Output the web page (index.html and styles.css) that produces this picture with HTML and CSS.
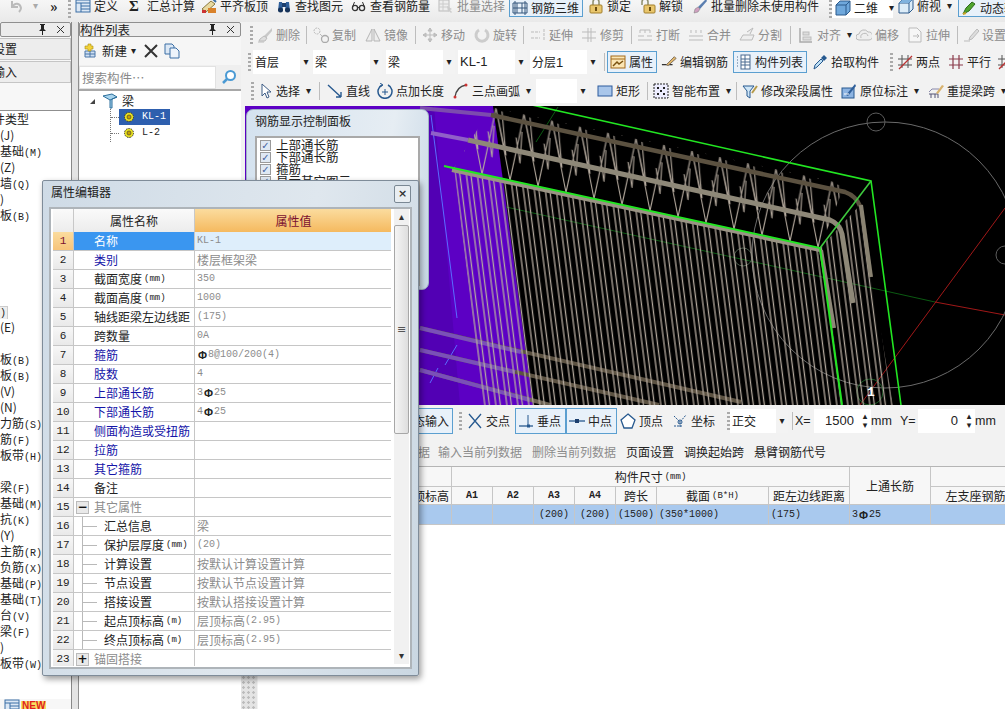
FILE: index.html
```html
<!DOCTYPE html>
<html lang="zh-CN">
<head>
<meta charset="utf-8">
<title>钢筋三维</title>
<link rel="stylesheet" href="styles.css">
</head>
<body>
<svg class="defs" aria-hidden="true">
  <symbol id="undo" viewBox="0 0 16 16"><path d="M4 3v6h6M4 9c3-5 8-4 9 1 0 2-1 3-2 4" fill="none" stroke="#bbb" stroke-width="2"/></symbol>
  <symbol id="def" viewBox="0 0 16 16"><rect x="1" y="2" width="14" height="12" fill="#dce8f5" stroke="#3b6ea5"/><path d="M1 5h14M6 5v9M6 8h9M6 11h9" stroke="#3b6ea5"/></symbol>
  <symbol id="flush" viewBox="0 0 16 16"><path d="M1 11l9-8 4 3-9 8z" fill="#e8d9a0" stroke="#8a7a40"/><rect x="7" y="10" width="8" height="5" fill="#d9822b"/><rect x="1" y="12" width="4" height="3" fill="#c33"/><path d="M12 1l3 3" stroke="#3b6ea5" stroke-width="2"/></symbol>
  <symbol id="bino" viewBox="0 0 16 16"><path d="M2 13l1-9h3l1 9zM9 13l1-9h3l1 9z" fill="#2f5f9a"/><rect x="6" y="5" width="4" height="4" fill="#1c3f6e"/><circle cx="4.500" cy="12" r="2.500" fill="#16335a"/><circle cx="11.500" cy="12" r="2.500" fill="#16335a"/></symbol>
  <symbol id="glass" viewBox="0 0 16 16"><circle cx="4" cy="10" r="2.600" fill="none" stroke="#333" stroke-width="1.300"/><circle cx="11" cy="10" r="2.600" fill="none" stroke="#333" stroke-width="1.300"/><path d="M6.500 9.500h2M1.500 9l2-5M13.500 9l-2-5" stroke="#333"/></symbol>
  <symbol id="batch" viewBox="0 0 16 16"><rect x="1" y="2" width="10" height="11" fill="#eee" stroke="#bbb"/><path d="M1 6h10M1 9h10M5 2v11" stroke="#ccc"/><path d="M9 8l5 3-2 1 2 2-1 1-2-2-1 1z" fill="#ccc"/></symbol>
  <symbol id="grid3" viewBox="0 0 16 16"><path d="M1 3h14v10H1zM5 3v10M10 3v10M1 8h14" fill="none" stroke="#34567c"/><path d="M3 1v14M13 1v14" stroke="#34567c"/></symbol>
  <symbol id="lock" viewBox="0 0 16 16"><path d="M5 7V4a3 3 0 016 0v3" fill="none" stroke="#8c8c6a" stroke-width="1.500"/><rect x="2" y="7" width="12" height="8" rx="1" fill="#e9c66c" stroke="#a17f2c"/><rect x="7" y="9" width="2" height="4" fill="#6b4d10"/></symbol>
  <symbol id="unlock" viewBox="0 0 16 16"><path d="M2 7V4a3 3 0 016 0v3" fill="none" stroke="#8c8c6a" stroke-width="1.500"/><rect x="4" y="7" width="11" height="8" rx="1" fill="#e9c66c" stroke="#a17f2c"/><rect x="9" y="9" width="2" height="4" fill="#6b4d10"/></symbol>
  <symbol id="brush" viewBox="0 0 16 16"><path d="M14 1L6 9l2 2 7-8z" fill="#5b7fb0"/><path d="M6 9l-3 2-1 4 4-1 2-3z" fill="#d0a0c0" stroke="#777" stroke-width=".5"/></symbol>
  <symbol id="cube" viewBox="0 0 16 16"><path d="M1 5l4-4h10v10l-4 4H1z" fill="#6fa8dc" stroke="#2c5b8c"/><path d="M1 5h10v10M11 5l4-4" fill="none" stroke="#2c5b8c"/></symbol>
  <symbol id="cubet" viewBox="0 0 16 16"><path d="M1 5l4-4h10v10l-4 4H1z" fill="#dcecf8" stroke="#2c5b8c"/><path d="M1 5h10v10M11 5l4-4" fill="none" stroke="#2c5b8c"/><path d="M1 5l4-4h10l-4 4z" fill="#7fb2de"/></symbol>
  <symbol id="dyn" viewBox="0 0 16 16"><path d="M2 14l3-6 6-6 3 2-6 7z" fill="#4fa52f" stroke="#2d6a1c"/><path d="M2 14l3-1" stroke="#c9a227" stroke-width="2"/></symbol>
  <symbol id="erase" viewBox="0 0 16 16"><path d="M15 1L7 9l2 2 6-7z" fill="#c8c8c8"/><path d="M7 9l-4 3-1 2h6l2-3z" fill="#ddd" stroke="#bbb"/><path d="M1 15h6" stroke="#bbb"/></symbol>
  <symbol id="copy" viewBox="0 0 16 16"><circle cx="4" cy="4" r="3" fill="none" stroke="#bbb" stroke-dasharray="2 1"/><circle cx="12" cy="12" r="3.500" fill="none" stroke="#aaa" stroke-width="1.300"/><path d="M7 7l2 2" stroke="#bbb"/></symbol>
  <symbol id="mirror" viewBox="0 0 16 16"><path d="M7 2v12H1zM9 2v12h6z" fill="#eee" stroke="#b5b5b5"/></symbol>
  <symbol id="move" viewBox="0 0 16 16"><path d="M8 1v14M1 8h14M8 1L6 4h4zM8 15l-2-3h4zM1 8l3-2v4zM15 8l-3-2v4z" fill="#ccc" stroke="#bbb"/></symbol>
  <symbol id="rot" viewBox="0 0 16 16"><path d="M5 3a6 6 0 106 0" fill="none" stroke="#ccc" stroke-width="3"/></symbol>
  <symbol id="ext" viewBox="0 0 16 16"><path d="M14 2v12M1 5h9M1 11h9" stroke="#bbb" fill="none" stroke-dasharray="3 1"/></symbol>
  <symbol id="trim" viewBox="0 0 16 16"><path d="M7 1v14M10 1v14M1 5h14M1 11h14" stroke="#bbb" fill="none"/></symbol>
  <symbol id="brk" viewBox="0 0 16 16"><path d="M1 9h6M10 9h5M1 13h14M3 3v3M8 3v3M13 3v3M3 3h10" stroke="#bbb" fill="none"/></symbol>
  <symbol id="merge" viewBox="0 0 16 16"><path d="M1 9h14M1 13h14M3 3v3M8 3v3M13 3v3" stroke="#bbb" fill="none"/></symbol>
  <symbol id="split" viewBox="0 0 16 16"><path d="M1 13h12l2-5H4zM8 5l6-4-3 6" fill="#eee" stroke="#bbb"/></symbol>
  <symbol id="align" viewBox="0 0 16 16"><path d="M2 1v14h12" fill="none" stroke="#aaa" stroke-width="1.500"/><rect x="5" y="5" width="6" height="3" fill="#ddd" stroke="#bbb"/><rect x="5" y="10" width="8" height="3" fill="#ddd" stroke="#bbb"/></symbol>
  <symbol id="cloud" viewBox="0 0 16 16"><path d="M3 13a3 3 0 010-6 5 5 0 019-2 4 4 0 011 8z" fill="#eee" stroke="#bbb"/><path d="M5 11a3 3 0 017-2" fill="none" stroke="#bbb"/></symbol>
  <symbol id="stretch" viewBox="0 0 16 16"><path d="M2 1h8l4 4v10H2z" fill="#f6f6f6" stroke="#bbb"/><path d="M6 9h6M10 7l2 2-2 2" fill="none" stroke="#bbb"/></symbol>
  <symbol id="gear" viewBox="0 0 16 16"><path d="M1 14h6M14 2L7 10l-1 3 3-1 7-8z" fill="#ddd" stroke="#bbb"/></symbol>
  <symbol id="attr" viewBox="0 0 16 16"><rect x="1" y="2" width="14" height="12" fill="#fbe6b5" stroke="#a36a1a"/><path d="M1 5h14" stroke="#a36a1a"/><path d="M3 12l4-4 2 2 4-3" stroke="#7a5210" fill="none" stroke-width="1.500"/></symbol>
  <symbol id="edit" viewBox="0 0 18 16"><path d="M1 11h12" stroke="#222" stroke-width="1.300"/><path d="M6 11l9-9 2 2-9 8z" fill="#e2b86a" stroke="#765"/></symbol>
  <symbol id="list" viewBox="0 0 16 16"><rect x="5" y="1" width="9" height="14" fill="#fff" stroke="#4a6a8f"/><path d="M5 5h9M5 8h9M5 11h9M9 1v14" stroke="#4a6a8f"/><path d="M1 3h2M1 6h2M1 9h2M1 12h2" stroke="#4a6a8f" stroke-dasharray="1 1"/></symbol>
  <symbol id="drop" viewBox="0 0 16 16"><path d="M2 15l1-4 6-6 2 2-6 6z" fill="#bfe0f5" stroke="#27598f"/><path d="M9 4l3-3 3 3-3 3z" fill="#27598f"/></symbol>
  <symbol id="twop" viewBox="0 0 16 16"><path d="M5 1v13M11 1v13M1 5h14M1 11h14" stroke="#555" fill="none"/><path d="M2 15L15 2" stroke="#b33" stroke-width="1.300"/></symbol>
  <symbol id="para" viewBox="0 0 16 16"><path d="M5 1v14M11 1v14M1 5h14M1 11h14" stroke="#8a3a4a" fill="none" stroke-width="1.200"/></symbol>
  <symbol id="cur" viewBox="0 0 13 16"><path d="M2 1v12l3-3 2 5 2-1-2-5h4z" fill="#fff" stroke="#3d5c85"/></symbol>
  <symbol id="line" viewBox="0 0 16 16"><path d="M1 2l13 12M14 14v-5M14 14H9" stroke="#27598f" fill="none" stroke-width="1.400"/></symbol>
  <symbol id="ptlen" viewBox="0 0 16 16"><path d="M5 2a7 7 0 106 0" fill="none" stroke="#27598f" stroke-width="1.500"/><path d="M3 0l3 2-3 2M8 6v6M5 9h6" stroke="#27598f" fill="none"/></symbol>
  <symbol id="arc" viewBox="0 0 16 16"><path d="M2 14C3 7 7 3 13 2" fill="none" stroke="#444" stroke-width="1.300"/><circle cx="2" cy="14" r="1.500" fill="#c33"/><circle cx="13" cy="2" r="1.500" fill="#c33"/></symbol>
  <symbol id="rect" viewBox="0 0 16 16"><rect x="1" y="3" width="14" height="10" fill="#a9c6ea" stroke="#2c5b9c"/></symbol>
  <symbol id="smart" viewBox="0 0 16 16"><rect x="1" y="1" width="14" height="14" fill="#eef" stroke="#222" stroke-dasharray="2 1"/><path d="M4 4h2v2H4zM10 4h2v2h-2zM7 7h2v2H7zM4 10h2v2H4zM10 10h2v2h-2z" fill="#222"/></symbol>
  <symbol id="funnel" viewBox="0 0 16 16"><path d="M1 3h11L8 8v7L5 13V8z" fill="#cfe6f7" stroke="#27598f"/><path d="M10 10l5-7" stroke="#b59a4a" stroke-width="2"/></symbol>
  <symbol id="tag" viewBox="0 0 16 16"><rect x="1" y="5" width="12" height="10" fill="#8db4e2" stroke="#27598f"/><path d="M5 12L14 1l1 2-8 10z" fill="#2f5f9a"/><path d="M3 11h5" stroke="#fff"/></symbol>
  <symbol id="beam" viewBox="0 0 16 16"><path d="M1 11h9v4M3 11v4M7 11v4" fill="none" stroke="#557" /><path d="M1 9l3-3h7" fill="none" stroke="#88a"/><path d="M8 10l6-8 2 1-6 8z" fill="#d8b26e"/></symbol>
  <symbol id="cross" viewBox="0 0 16 16"><path d="M2 1l12 14M14 1L2 15" stroke="#27598f" stroke-width="1.300"/></symbol>
  <symbol id="perp" viewBox="0 0 16 16"><path d="M1 13h14" stroke="#27598f" stroke-width="1.300"/><path d="M10 2v11" stroke="#27598f"/><rect x="9" y="11.500" width="3" height="3" fill="#27598f"/></symbol>
  <symbol id="mid" viewBox="0 0 16 16"><path d="M0 8h16" stroke="#27598f" stroke-width="1.300"/><rect x="6" y="6" width="4" height="4" fill="#1c3f6e"/></symbol>
  <symbol id="vert" viewBox="0 0 16 16"><path d="M8 1l7 6-3 8H4L1 7z" fill="#fff" stroke="#27598f" stroke-width="1.300"/></symbol>
  <symbol id="coord" viewBox="0 0 16 16"><path d="M2 3l6 6 6-7M8 9v6M2 13h8" stroke="#27598f" fill="none" stroke-dasharray="2 1"/><circle cx="8" cy="9" r="2" fill="none" stroke="#27598f"/></symbol>
  <symbol id="newi" viewBox="0 0 16 16"><path d="M2 8h10v6H2z" fill="#cfe0f3" stroke="#4a76a8"/><path d="M2 11h10M7 8v6" stroke="#4a76a8"/><path d="M5 1h3v2h2v3H8v2H5V6H2V3h3z" fill="#f2d23a" stroke="#a88f10" stroke-width=".6"/></symbol>
  <symbol id="beamt" viewBox="0 0 16 16"><path d="M1 3l9-2 5 3-5 2v9H8V7z" fill="#a8d4ee" stroke="#2c6f9c"/><path d="M8 7l7-3" stroke="#2c6f9c"/></symbol>
  <symbol id="gearj" viewBox="0 0 12 12"><circle cx="6" cy="6" r="4.500" fill="#e8e020" stroke="#333" stroke-dasharray="1.500 1"/><circle cx="6" cy="6" r="2" fill="#c9a000" stroke="#333" stroke-width=".6"/></symbol>
  <symbol id="copyd" viewBox="0 0 16 16"><path d="M1 1h7l2 2v8H1z" fill="#dce8f5" stroke="#3b6ea5"/><path d="M6 5h6l3 3v7H6z" fill="#eef4fb" stroke="#3b6ea5"/></symbol>
  <symbol id="pin" viewBox="0 0 9 11"><path d="M2 0h5v1H6v4l2 2H5v4H4V7H1l2-2V1H2z" fill="#222"/></symbol>
  <symbol id="xs" viewBox="0 0 9 9"><path d="M1 1l7 7M8 1L1 8" stroke="#333"/></symbol>
</svg>

<header class="tb tb1">
  <div class="tool"><svg class="i"><use href="#undo"/></svg><i class="ar g">▾</i></div>
  <div class="tool more">»</div>
  <div class="grip"></div>
  <div class="tool"><svg class="i"><use href="#def"/></svg><span>定义</span></div>
  <div class="tool"><b class="sig">Σ</b><span>汇总计算</span></div>
  <div class="tool"><svg class="i"><use href="#flush"/></svg><span>平齐板顶</span></div>
  <div class="tool"><svg class="i"><use href="#bino"/></svg><span>查找图元</span></div>
  <div class="tool"><svg class="i"><use href="#glass"/></svg><span>查看钢筋量</span></div>
  <div class="tool off"><svg class="i"><use href="#batch"/></svg><span>批量选择</span></div>
  <div class="tool sel"><svg class="i"><use href="#grid3"/></svg><span>钢筋三维</span></div>
  <div class="tool"><svg class="i"><use href="#lock"/></svg><span>锁定</span></div>
  <div class="tool"><svg class="i"><use href="#unlock"/></svg><span>解锁</span></div>
  <div class="tool"><svg class="i"><use href="#brush"/></svg><span>批量删除未使用构件</span></div>
  <div class="grip"></div>
  <div class="tool whitebox"><svg class="i"><use href="#cube"/></svg><span>二维</span><i class="ar">▾</i></div>
  <div class="tool"><svg class="i"><use href="#cubet"/></svg><span>俯视</span><i class="ar">▾</i></div>
  <div class="tool sel"><svg class="i"><use href="#dyn"/></svg><span>动态输入</span></div>
</header>

<div class="work">
  <aside class="lp">
    <div class="ttl"><span></span><span class="ttlbtn"><svg class="pin"><use href="#pin"/></svg><svg class="xs"><use href="#xs"/></svg></span></div>
    <div class="lbtn"><span class="cut">设置</span></div>
    <div class="lbtn"><span class="cut">输入</span></div>
    <div class="lgap"></div>
    <ul class="llist">
      <li><span class="cut">件类型</span></li><li>(J)</li><li>基础<em>(M)</em></li><li>(Z)</li><li>墙<em>(Q)</em></li><li>)</li><li>板<em>(B)</em></li><li></li><li></li><li></li><li></li><li></li>
      <li><span class="lbox">)</span></li><li>(E)</li><li></li><li>板<em>(B)</em></li><li>板<em>(B)</em></li><li>(V)</li><li>(N)</li><li>力筋<em>(S)</em></li><li>筋<em>(F)</em></li><li>板带<em>(H)</em></li><li></li>
      <li>梁<em>(F)</em></li><li>基础<em>(M)</em></li><li>抗<em>(K)</em></li><li>(Y)</li><li>主筋<em>(R)</em></li><li>负筋<em>(X)</em></li><li>基础<em>(P)</em></li><li>基础<em>(T)</em></li><li>台<em>(V)</em></li><li>梁<em>(F)</em></li><li>)</li><li>板带<em>(W)</em></li>
    </ul>
    <div class="newbadge"><svg class="i"><use href="#def"/></svg><b>NEW</b></div>
  </aside>

  <section class="cp">
    <div class="ttl"><span>构件列表</span><span class="ttlbtn"><svg class="pin"><use href="#pin"/></svg><svg class="xs"><use href="#xs"/></svg></span></div>
    <div class="cpbar">
      <svg class="i"><use href="#newi"/></svg><span>新建</span><i class="ar">▾</i>
      <svg class="i xi" viewBox="0 0 16 16"><path d="M2 2l12 12M14 2L2 14" stroke="#333" stroke-width="2"/></svg>
      <svg class="i"><use href="#copyd"/></svg>
    </div>
    <div class="search">
      <div class="sinput">搜索构件…</div>
      <svg class="i sglass" viewBox="0 0 16 16"><circle cx="9.500" cy="6.500" r="4.500" fill="#fff" stroke="#4a9ad4" stroke-width="2"/><path d="M6 10l-4 4" stroke="#4a9ad4" stroke-width="2.500"/></svg>
    </div>
    <div class="tree">
      <div class="troot"><i class="tri"></i><svg class="i"><use href="#beamt"/></svg><span>梁</span></div>
      <div class="tkids">
        <div class="tnode"><i class="dots"></i><div class="tlab on"><svg class="gi"><use href="#gearj"/></svg><span class="mono">KL-1</span></div></div>
        <div class="tnode"><i class="dots"></i><div class="tlab"><svg class="gi"><use href="#gearj"/></svg><span class="mono">L-2</span></div></div>
      </div>
    </div>
  </section>

  <main class="mn">
    <div class="tb tb2">
      <div class="grip"></div>
      <div class="tool off"><svg class="i"><use href="#erase"/></svg><span>删除</span></div><i class="sep"></i>
      <div class="tool off"><svg class="i"><use href="#copy"/></svg><span>复制</span></div>
      <div class="tool off"><svg class="i"><use href="#mirror"/></svg><span>镜像</span></div><i class="sep"></i>
      <div class="tool off"><svg class="i"><use href="#move"/></svg><span>移动</span></div>
      <div class="tool off"><svg class="i"><use href="#rot"/></svg><span>旋转</span></div><i class="sep"></i>
      <div class="tool off"><svg class="i"><use href="#ext"/></svg><span>延伸</span></div>
      <div class="tool off"><svg class="i"><use href="#trim"/></svg><span>修剪</span></div><i class="sep"></i>
      <div class="tool off"><svg class="i"><use href="#brk"/></svg><span>打断</span></div>
      <div class="tool off"><svg class="i"><use href="#merge"/></svg><span>合并</span></div>
      <div class="tool off"><svg class="i"><use href="#split"/></svg><span>分割</span></div><i class="sep"></i>
      <div class="tool off"><svg class="i"><use href="#align"/></svg><span>对齐</span><i class="ar">▾</i></div>
      <div class="tool off"><svg class="i"><use href="#cloud"/></svg><span>偏移</span></div>
      <div class="tool off"><svg class="i"><use href="#stretch"/></svg><span>拉伸</span></div><i class="sep"></i>
      <div class="tool off"><svg class="i"><use href="#gear"/></svg><span>设置</span></div>
    </div>

    <div class="tb tb3">
      <div class="grip"></div>
      <div class="combo c1"><span>首层</span><i>▾</i></div>
      <div class="combo c2"><span>梁</span><i>▾</i></div>
      <div class="combo c2"><span>梁</span><i>▾</i></div>
      <div class="combo c2"><span class="lat">KL-1</span><i>▾</i></div>
      <div class="combo c2"><span>分层<b class="lat">1</b></span><i>▾</i></div>
      <i class="sep"></i>
      <div class="tool sel"><svg class="i"><use href="#attr"/></svg><span>属性</span></div>
      <div class="tool"><svg class="i"><use href="#edit"/></svg><span>编辑钢筋</span></div>
      <div class="tool sel"><svg class="i"><use href="#list"/></svg><span>构件列表</span></div>
      <div class="tool"><svg class="i"><use href="#drop"/></svg><span>拾取构件</span></div>
      <div class="grip"></div>
      <div class="tool"><svg class="i"><use href="#twop"/></svg><span>两点</span></div>
      <div class="tool"><svg class="i"><use href="#para"/></svg><span>平行</span></div>
      <div class="tool"><svg class="i"><use href="#twop"/></svg></div>
    </div>

    <div class="tb tb4">
      <div class="grip"></div>
      <div class="tool"><svg class="i13"><use href="#cur"/></svg><span>选择</span><i class="ar">▾</i></div><i class="sep"></i>
      <div class="tool"><svg class="i"><use href="#line"/></svg><span>直线</span></div>
      <div class="tool"><svg class="i"><use href="#ptlen"/></svg><span>点加长度</span></div>
      <div class="tool"><svg class="i"><use href="#arc"/></svg><span>三点画弧</span><i class="ar">▾</i></div>
      <div class="combo c3"><span></span><i>▾</i></div>
      <div class="tool"><svg class="i"><use href="#rect"/></svg><span>矩形</span></div><i class="sep"></i>
      <div class="tool"><svg class="i"><use href="#smart"/></svg><span>智能布置</span><i class="ar">▾</i></div><i class="sep"></i>
      <div class="tool"><svg class="i"><use href="#funnel"/></svg><span>修改梁段属性</span></div>
      <div class="tool"><svg class="i"><use href="#tag"/></svg><span>原位标注</span><i class="ar">▾</i></div>
      <div class="tool"><svg class="i"><use href="#beam"/></svg><span>重提梁跨</span><i class="ar">▾</i></div>
    </div>

    <div class="view">
      <svg class="scene" viewBox="245 106 760 299" aria-hidden="true">
        <defs>
          <pattern id="stir" width="11" height="400" patternUnits="userSpaceOnUse" patternTransform="translate(454 0) skewX(7.300)">
            <path d="M1 0v400M5.500 0v400" stroke="#b5aa9e" stroke-width="1.300"/>
          </pattern>
          <pattern id="zig" width="28" height="69" patternUnits="userSpaceOnUse" patternTransform="translate(454 99) skewY(12.300)">
            <path d="M14 0L0 69M14 0L28 69M14 0L24 45L20 2M6 25L10 50L12 18" stroke="#b5aa9e" stroke-width="1.100" fill="none"/>
          </pattern>
        </defs>
        <rect x="245" y="106" width="760" height="299" fill="#000"/>
        <path d="M245 106H493L533 405H245z" fill="#5c00c4"/>
        <path d="M420 106h14l26 299h-40z" fill="#5200b4"/>
        <path d="M431 115l26 203M457 345l-12 20M438 368l-8 15" stroke="#5a6cff" fill="none"/>
        <path d="M506 207L935 302" stroke="#0b5a12"/>
        <path d="M558 107l-22 35" stroke="#0b5a12"/>
        <path d="M935 302L1005 315M860 405L1005 208" stroke="#a01818" fill="none"/>
        <circle cx="885" cy="255" r="133" fill="none" stroke="#6a6a6a"/>
        <circle cx="876" cy="122" r="9" fill="none" stroke="#5c5c5c"/>
        <circle cx="743" cy="257" r="9" fill="none" stroke="#4c5c4c"/>
        <circle cx="1005" cy="255" r="9" fill="none" stroke="#5c5c5c"/>
        <circle cx="870" cy="392" r="13" fill="none" stroke="#1a5a24"/>
        <path d="M420 108L491 115" stroke="#7c4cae" stroke-width="4"/>
        <path d="M431 133L468 140" stroke="#9060c8" stroke-width="4"/>
        <path d="M420 328L741 402" stroke="#5c5242" stroke-width="4"/>
        <path d="M420 350L659 405" stroke="#5c5242" stroke-width="4"/>
        <path d="M420 370L550 405" stroke="#6b6252" stroke-width="4"/>
        <path d="M420 328L521 352M420 350L515 372M420 370L530 400" stroke="#7a50b8" stroke-width="4"/>
        <path d="M454 168L820 248L860 205L893 405H483z" fill="url(#stir)"/>
        <path d="M491 107L845 184L820 248L454 168z" fill="url(#zig)"/>
        <path d="M491 115L845 192Q856 196 860 206" fill="none" stroke="#5b5140" stroke-width="4.500"/>
        <path d="M861 205L871 277" fill="none" stroke="#8a8372" stroke-width="4"/>
        <path d="M468 140L830 220Q840 224 842 234L853 303" fill="none" stroke="#8e8878" stroke-width="5"/>
        <path d="M452 170L820 250" fill="none" stroke="#9a9484" stroke-width="4"/>
        <path d="M821 250L834 328" fill="none" stroke="#8e8878" stroke-width="4"/>
        <path d="M532 105L871 181L901 405" fill="none" stroke="#22e622" stroke-width="1.600"/>
        <path d="M444 166L820 248L842 405" fill="none" stroke="#22e622" stroke-width="2"/>
        <path d="M820 248L871 181" fill="none" stroke="#3ec93e" stroke-width="1.600"/>
        <text x="867" y="396" class="scenetxt">1</text>
      </svg>

      <div class="ctrl">
        <div class="ctitle">钢筋显示控制面板</div>
        <div class="cbody">
          <div class="cr"><i class="chk">✓</i>上部通长筋</div>
          <div class="cr"><i class="chk">✓</i>下部通长筋</div>
          <div class="cr"><i class="chk">✓</i>箍筋</div>
          <div class="cr"><i class="chk">✓</i>显示其它图元</div>
        </div>
      </div>
    </div>

    <div class="lower">
      <div class="lgrip"></div>
      <div class="lmain">
        <div class="tb tb5">
          <div class="tool sel dynr"><span>动态输入</span></div>
          <div class="grip"></div>
          <div class="tool"><svg class="i"><use href="#cross"/></svg><span>交点</span></div>
          <div class="tool sel"><svg class="i"><use href="#perp"/></svg><span>垂点</span></div>
          <div class="tool sel"><svg class="i"><use href="#mid"/></svg><span>中点</span></div>
          <div class="tool pad"><svg class="i"><use href="#vert"/></svg><span>顶点</span></div>
          <div class="tool pad"><svg class="i"><use href="#coord"/></svg><span>坐标</span></div>
          <div class="grip"></div>
          <div class="combo c4"><span>正交</span><i>▾</i></div>
          <i class="sep"></i>
          <span class="lat">X=</span>
          <div class="num"><span>1500</span><i class="spin">▴<br>▾</i></div>
          <span class="lat">mm</span>
          <span class="lat">Y=</span>
          <div class="num"><span>0</span><i class="spin">▴<br>▾</i></div>
          <span class="lat">mm</span>
        </div>

        <div class="tabs">
          <span class="off rt">除当前列数据</span>
          <span class="off">输入当前列数据</span>
          <span class="off">删除当前列数据</span>
          <span>页面设置</span>
          <span>调换起始跨</span>
          <span>悬臂钢筋代号</span>
        </div>

        <div class="dg">
          <div class="h c0 r1"></div>
          <div class="h gh">构件尺寸<small class="mono">(mm)</small></div>
          <div class="h tall">上通长筋</div>
          <div class="h r1 c10"></div>
          <div class="h rt0">顶标高</div>
          <div class="h mono">A1</div>
          <div class="h mono">A2</div>
          <div class="h mono">A3</div>
          <div class="h mono">A4</div>
          <div class="h">跨长</div>
          <div class="h">截面<small class="mono">(B*H)</small></div>
          <div class="h">距左边线距离</div>
          <div class="h c10">左支座钢筋</div>
          <div class="d"></div>
          <div class="d"></div>
          <div class="d"></div>
          <div class="d mono ctr">(200)</div>
          <div class="d mono ctr">(200)</div>
          <div class="d mono ctr">(1500)</div>
          <div class="d mono">(350*1000)</div>
          <div class="d mono">(175)</div>
          <div class="d"><span class="mono">3</span><b class="ph">Φ</b><span class="mono">25</span></div>
          <div class="d"></div>
        </div>
      </div>
    </div>
  </main>
</div>

<div class="dlg">
  <div class="dtitle"><span>属性编辑器</span><button class="dclose" type="button">×</button></div>
  <div class="dbox">
    <div class="pg">
      <div class="ph0 pgc"></div><div class="ph0 pgc">属性名称</div><div class="ph1 pgc">属性值</div>
      <div class="no active">1</div><div class="nm cur">名称</div><div class="val curv"><span class="mono">KL-1</span></div>
      <div class="no">2</div><div class="nm blue">类别</div><div class="val">楼层框架梁</div>
      <div class="no">3</div><div class="nm">截面宽度<small class="mono">(mm)</small></div><div class="val mono">350</div>
      <div class="no">4</div><div class="nm">截面高度<small class="mono">(mm)</small></div><div class="val mono">1000</div>
      <div class="no">5</div><div class="nm">轴线距梁左边线距</div><div class="val mono">(175)</div>
      <div class="no">6</div><div class="nm">跨数量</div><div class="val mono">0A</div>
      <div class="no">7</div><div class="nm blue">箍筋</div><div class="val"><b class="ph">Φ</b><span class="mono">8@100/200(4)</span></div>
      <div class="no">8</div><div class="nm blue">肢数</div><div class="val mono">4</div>
      <div class="no">9</div><div class="nm blue">上部通长筋</div><div class="val"><span class="mono">3</span><b class="ph">Φ</b><span class="mono">25</span></div>
      <div class="no">10</div><div class="nm blue">下部通长筋</div><div class="val"><span class="mono">4</span><b class="ph">Φ</b><span class="mono">25</span></div>
      <div class="no">11</div><div class="nm blue">侧面构造或受扭筋</div><div class="val"></div>
      <div class="no">12</div><div class="nm blue">拉筋</div><div class="val"></div>
      <div class="no">13</div><div class="nm blue">其它箍筋</div><div class="val"></div>
      <div class="no">14</div><div class="nm">备注</div><div class="val"></div>
      <div class="no">15</div><div class="nm grp"><i class="pm">−</i>其它属性</div><div class="val"></div>
      <div class="no">16</div><div class="nm kid">汇总信息</div><div class="val">梁</div>
      <div class="no">17</div><div class="nm kid">保护层厚度<small class="mono">(mm)</small></div><div class="val mono">(20)</div>
      <div class="no">18</div><div class="nm kid">计算设置</div><div class="val">按默认计算设置计算</div>
      <div class="no">19</div><div class="nm kid">节点设置</div><div class="val">按默认节点设置计算</div>
      <div class="no">20</div><div class="nm kid">搭接设置</div><div class="val">按默认搭接设置计算</div>
      <div class="no">21</div><div class="nm kid">起点顶标高<small class="mono">(m)</small></div><div class="val">层顶标高<span class="mono">(2.95)</span></div>
      <div class="no">22</div><div class="nm kid">终点顶标高<small class="mono">(m)</small></div><div class="val">层顶标高<span class="mono">(2.95)</span></div>
      <div class="no">23</div><div class="nm grp"><i class="pm">+</i>锚固搭接</div><div class="val"></div>
    </div>
    <div class="sb">
      <i class="sba">▴</i>
      <div class="thumb"><span>≡</span></div>
      <i class="sba end">▾</i>
    </div>
  </div>
</div>
</body>
</html>
```

FILE: styles.css
```css
* { box-sizing: border-box; }
html, body { margin: 0; height: 709px; overflow: hidden; }
body {
  position: relative;
  width: 1005px;
  background: #f3f3f3;
  color: #222;
  font: 12px/16px "Noto Sans CJK SC", "Liberation Sans", sans-serif;
  display: flex;
  flex-direction: column;
}
i, em { font-style: normal; }
.defs { width: 0; height: 0; position: absolute; }
.i { width: 16px; height: 16px; flex: none; }
.i13 { width: 13px; height: 16px; flex: none; }
.mono { font-family: "Liberation Mono", "Noto Sans CJK SC", monospace; font-size: 10px; }
.lat { font-family: "Liberation Sans", sans-serif; font-size: 13px; font-weight: 400; }
small.mono { font-size: 9px; margin-left: 2px; }

/* toolbars */
.tb { display: grid; align-items: center; justify-items: start; background: #f2f2f2; white-space: nowrap; }
.tool { display: flex; align-items: center; gap: 3px; height: 22px; }
.tool.off { color: #8c8c8c; }
.tool.sel { background: #e8f1fa; border: 1px solid #5b9fd0; padding: 0 3px 0 2px; }
.tool.pad { padding-left: 3px; }
.ar { font-size: 10px; margin-left: 3px; color: #222; font-family: "DejaVu Sans", sans-serif; }
.ar.g { color: #aaa; margin-left: 6px; }
.grip { width: 3px; height: 18px; background: repeating-linear-gradient(#aaa 0 2px, transparent 2px 4px); justify-self: center; }
.sep { width: 1px; height: 18px; background: #bdbdbd; justify-self: start; display: block; }
.sig { font: 700 15px "Liberation Serif", serif; width: 16px; text-align: left; padding-left: 1px; }
.more { font-size: 14px; font-weight: 700; }

.tb1 {
  height: 22px;
  padding-left: 8px;
  overflow: hidden;
  align-items: start;
  background: linear-gradient(#f6f6f6, #e9e9e9);
  grid-template-columns: 42px 14px 11px 53px 73px 75px 75px 87px 71px 79px 52px 52px 136px 4px 66px 60px 47px;
}
.tb1 .tool { height: 16px; margin-top: -2px; }
.tb1 .tool.sel { height: 19px; margin-top: -2px; }
.whitebox { background: #fff; width: 61px; padding-left: 3px; height: 20px !important; }
.whitebox .ar { margin-left: 8px; }

.work { flex: 1; display: flex; min-height: 0; background: #e4e4e4; }

/* left panels */
.ttl { height: 15px; display: flex; justify-content: space-between; align-items: center; background: #ececec; border: 1px solid #8f8f8f; border-radius: 2px; font-size: 12.500px; line-height: 13px; }
.ttlbtn { display: flex; align-items: center; gap: 9px; padding-right: 5px; }
.pin { width: 9px; height: 11px; }
.xs { width: 9px; height: 9px; }
.lp { width: 72px; border-right: 1px solid #888; background: #f7f7f7; overflow: hidden; }
.lbtn { height: 22px; margin-top: 1px; background: #ededed; border: 1px solid #c5c5c5; border-left: 0; line-height: 20px; font-size: 12px; overflow: hidden; }
.cut { margin-left: -7px; display: inline-block; }
.lgap { height: 27px; }
.llist { list-style: none; margin: 0; padding: 0; background: #fff; border-top: 1px solid #8f8f8f; height: 589px; overflow: hidden; }
.llist li { height: 16px; line-height: 16px; white-space: nowrap; overflow: hidden; font-family: "Noto Sans CJK SC", sans-serif; font-size: 12px; }
.llist em { font: 10px "Liberation Mono", monospace; }
.lbox { display: inline-block; width: 8px; height: 15px; background: #eee; border: 1px solid #ccc; border-left: 0; font: 10px/13px "Liberation Mono", monospace; }
.newbadge { display: flex; align-items: center; gap: 1px; margin: -1px 0 0 4px; }
.newbadge b { font: 700 10px/10px "Liberation Sans", sans-serif; color: #e02020; background: #f8e060; padding: 0 1px; }
.cp { width: 163px; margin-left: 6px; background: #fff; display: flex; flex-direction: column; border-left: 1px solid #8f8f8f; }
.cpbar { height: 28px; display: flex; align-items: center; padding-left: 4px; gap: 3px; background: #f6f6f6; font-size: 12.500px; }
.cpbar .ar { margin-left: 1px; }
.xi { margin: 0 2px 0 4px; }
.search { height: 24px; display: flex; align-items: center; background: #efefef; }
.sinput { width: 137px; height: 23px; background: #fff; border: 1px solid #e2e2e2; color: #8a8a8a; padding-left: 2px; line-height: 21px; font-size: 12.500px; }
.sglass { margin-left: 5px; }
.tree { flex: 1; border-top: 2px solid #a8a8a8; padding-top: 2px; background: #fff; }
.troot { display: flex; align-items: center; height: 16px; padding-left: 11px; gap: 3px; }
.tri { width: 0; height: 0; margin-right: 4px; border-left: 5px solid transparent; border-bottom: 5px solid #444; }
.troot span { margin-left: 1px; }
.tkids { margin-left: 31px; border-left: 1px dotted #777; height: 33px; margin-top: 0; }
.tnode { display: flex; align-items: center; height: 16px; }
.dots { width: 8px; border-top: 1px dotted #777; }
.tlab { display: flex; align-items: center; height: 16px; padding-left: 4px; gap: 7px; width: 51px; }
.tlab.on { background: #2e5fae; color: #fff; }
.gi { width: 12px; height: 12px; flex: none; }

/* main column */
.mn { flex: 1; min-width: 0; display: flex; flex-direction: column; background: #f2f2f2; }
.tb2, .tb3, .tb4 { margin-left: 4px; }
.tb2 { height: 21px; margin-top: 2px; grid-template-columns: 12px 49px 7px 52px 50px 7px 52px 49px 7px 51px 50px 6px 51px 51px 51px 8px 58px 51px 50px 6px 60px; }
.tb3 { height: 26px; margin-top: 4px; grid-template-columns: 8px 60px 73px 72px 72px 74px 3px 54px 72px 79px 73px 12px 51px 49px 20px; }
.tb4 { height: 28px; margin-top: 2px; grid-template-columns: 15px 59px 8px 50px 76px 83px 61px 50px 6px 83px 6px 99px 87px 90px; }
.combo { display: flex; align-items: center; justify-content: space-between; height: 24px; background: #fff; padding-left: 2px; }
.combo i { width: 12px; height: 24px; line-height: 24px; text-align: center; background: #f3f3f3; font: 10px/24px "DejaVu Sans", sans-serif; }
.c1 { width: 59px; }
.c2 { width: 69px; }
.c3 { width: 53px; }
.c4 { width: 58px; }

.view { position: relative; height: 299px; margin: 1px 0 0 4px; background: #000; }
.scene { display: block; width: 760px; height: 299px; }
.scenetxt { fill: #fff; font: 700 13px "Liberation Mono", monospace; }
.ctrl { position: absolute; left: 1px; top: 3px; width: 183px; height: 181px; padding: 2px 8px; background: linear-gradient(100deg, #d4e2ef, #e6edf3 70%, #c8d8e6); border: 1px solid #9fb2c4; border-radius: 7px; }
.ctitle { height: 24px; line-height: 18px; font-size: 12px; }
.cbody { height: 150px; background: #fff; border: 2px solid #a9a9a9; padding: 1px 2px 0 3px; }
.cr { display: flex; align-items: center; height: 12px; gap: 5px; font-size: 12.500px; line-height: 12px; }
.chk { width: 11px; height: 11px; background: #dfe8f3; border: 1px solid #9a9a9a; color: #3f64a0; font: 700 10px/10px "DejaVu Sans", sans-serif; text-align: center; }

.lower { flex: 1; min-height: 0; display: flex; }
.lgrip { width: 16px; background: #e4e4e4 radial-gradient(#bcbcbc 1px, transparent 1.500px) 0 0 / 5px 5px; }
.lmain { flex: 1; min-width: 0; margin-left: 1px; background: #fff; overflow: hidden; display: flex; flex-direction: column; }
.tb5 { height: 31px; grid-template-columns: 195px 14px 48px 51px 51px 52px 57px 4px 62px 3px 19px 57px 29px 18px 57px 30px; font-size: 12px; }
.tb5 .tool.sel { height: 26px; width: 51px; }
.tb5 .lat { font-size: 12.500px; }
.tool.dynr { width: 195px !important; justify-content: flex-end; }
.num { display: flex; justify-content: flex-end; align-items: center; background: #fff; height: 24px; width: 57px; font: 13px "Liberation Sans", sans-serif; }
.spin { width: 12px; margin-left: 5px; font: 9px/9px "DejaVu Sans", sans-serif; text-align: center; }
.tabs { height: 31px; display: grid; align-items: center; background: #f2f2f2; grid-template-columns: 180px 94px 94px 58px 70px 80px; white-space: nowrap; }
.off { color: #8c8c8c; }
.rt { justify-self: end; padding-right: 8px; }
.dg { display: grid; grid-template-columns: 194px 41px 41px 41px 41px 41px 112px 81px 81px 90px; grid-template-rows: 20px 18px 20px; border-top: 1px solid #b5b5b5; margin-top: -1px; }
.h, .d { border-right: 1px solid #c6c6c6; border-bottom: 1px solid #c6c6c6; display: flex; align-items: center; white-space: nowrap; overflow: hidden; }
.h { background: #f7f7f7; justify-content: center; }
.h.mono { font-weight: 700; }
.gh { grid-column: span 7; }
.tall { grid-row: span 2; }
.rt0 { justify-content: flex-end; padding-right: 2px; }
.d { background: #a9c9ee; padding-left: 2px; }
.d.ctr { justify-content: center; padding-left: 0; }
.ph { font: 700 11px "Liberation Sans", sans-serif; margin: 0 1px; color: #222; }

/* floating property editor */
.dlg { position: absolute; left: 42px; top: 180px; width: 377px; height: 496px; padding: 0 6px; background: linear-gradient(100deg, #cfdbe6, #dfe7ee 60%, #cad7e2); border: 1px solid #7f8c99; border-radius: 2px; box-shadow: 2px 3px 6px rgba(0, 0, 0, .4); }
.dtitle { height: 26px; display: flex; align-items: center; justify-content: space-between; padding: 0 0 4px 2px; }
.dclose { width: 17px; height: 18px; padding: 0; background: #e9eef2; border: 1px solid #7a8894; border-radius: 2px; color: #333; font: 700 11px/14px "DejaVu Sans", sans-serif; margin-right: 1px; margin-top: 4px; }
.dbox { height: 462px; display: flex; background: #fff; border: 2px solid #aeb4b9; padding: 0 1px 3px 2px; }
.pg { width: 339px; height: 457px; overflow: hidden; display: grid; grid-template-columns: 21px 121px 197px; grid-template-rows: 23px repeat(23, 19px); }
.pgc { display: flex; align-items: center; justify-content: center; }
.ph0 { background: linear-gradient(#fafafa, #ececec); border-right: 1px solid #c8c8c8; }
.ph1 { background: linear-gradient(#fbdc9e, #f5b95f); color: #7a1030; }
.no { background: linear-gradient(#f7f7f7, #e9e9e9); border-right: 1px solid #c6c6c6; border-bottom: 1px solid #c6c6c6; text-align: center; font: 11px/18px "Liberation Mono", monospace; }
.no.active { background: linear-gradient(#fbdc9e, #f7c47a); color: #7a1030; }
.nm, .val { display: flex; align-items: center; height: 19px; border-bottom: 1px solid #c6c6c6; border-right: 1px solid #c6c6c6; padding-left: 20px; white-space: nowrap; overflow: hidden; }
.val { padding-left: 2px; color: #8c8c8c; }
.val .ph { color: #222; margin: 0 1px; }
.nm.blue { color: #1515a8; }
.nm.cur { background: #3a96f0; color: #fff; }
.val.curv { background: #deeefb; }
.nm.grp { padding-left: 2px; gap: 5px; color: #8c8c8c; }
.pm { width: 13px; height: 13px; border: 1px solid #bbb; background: #e9e9e9; color: #111; font: 700 12px/11px "DejaVu Sans", sans-serif; text-align: center; }
.nm.kid { padding-left: 30px; background: linear-gradient(#b9b9b9, #b9b9b9) 8px 9px / 15px 1px no-repeat, linear-gradient(#b9b9b9, #b9b9b9) 8px 0 / 1px 100% no-repeat; }
.sb { flex: 1; margin-left: 3px; display: flex; flex-direction: column; align-items: center; background: #f1f1f1; }
.sba { font: 10px/16px "DejaVu Sans", sans-serif; height: 16px; color: #333; }
.sba.end { margin-top: auto; }
.thumb { width: 15px; height: 209px; background: linear-gradient(90deg, #f5f5f5, #dedede); border: 1px solid #a7a7a7; border-radius: 2px; display: flex; align-items: center; justify-content: center; font: 11px "DejaVu Sans", sans-serif; color: #555; }
```
